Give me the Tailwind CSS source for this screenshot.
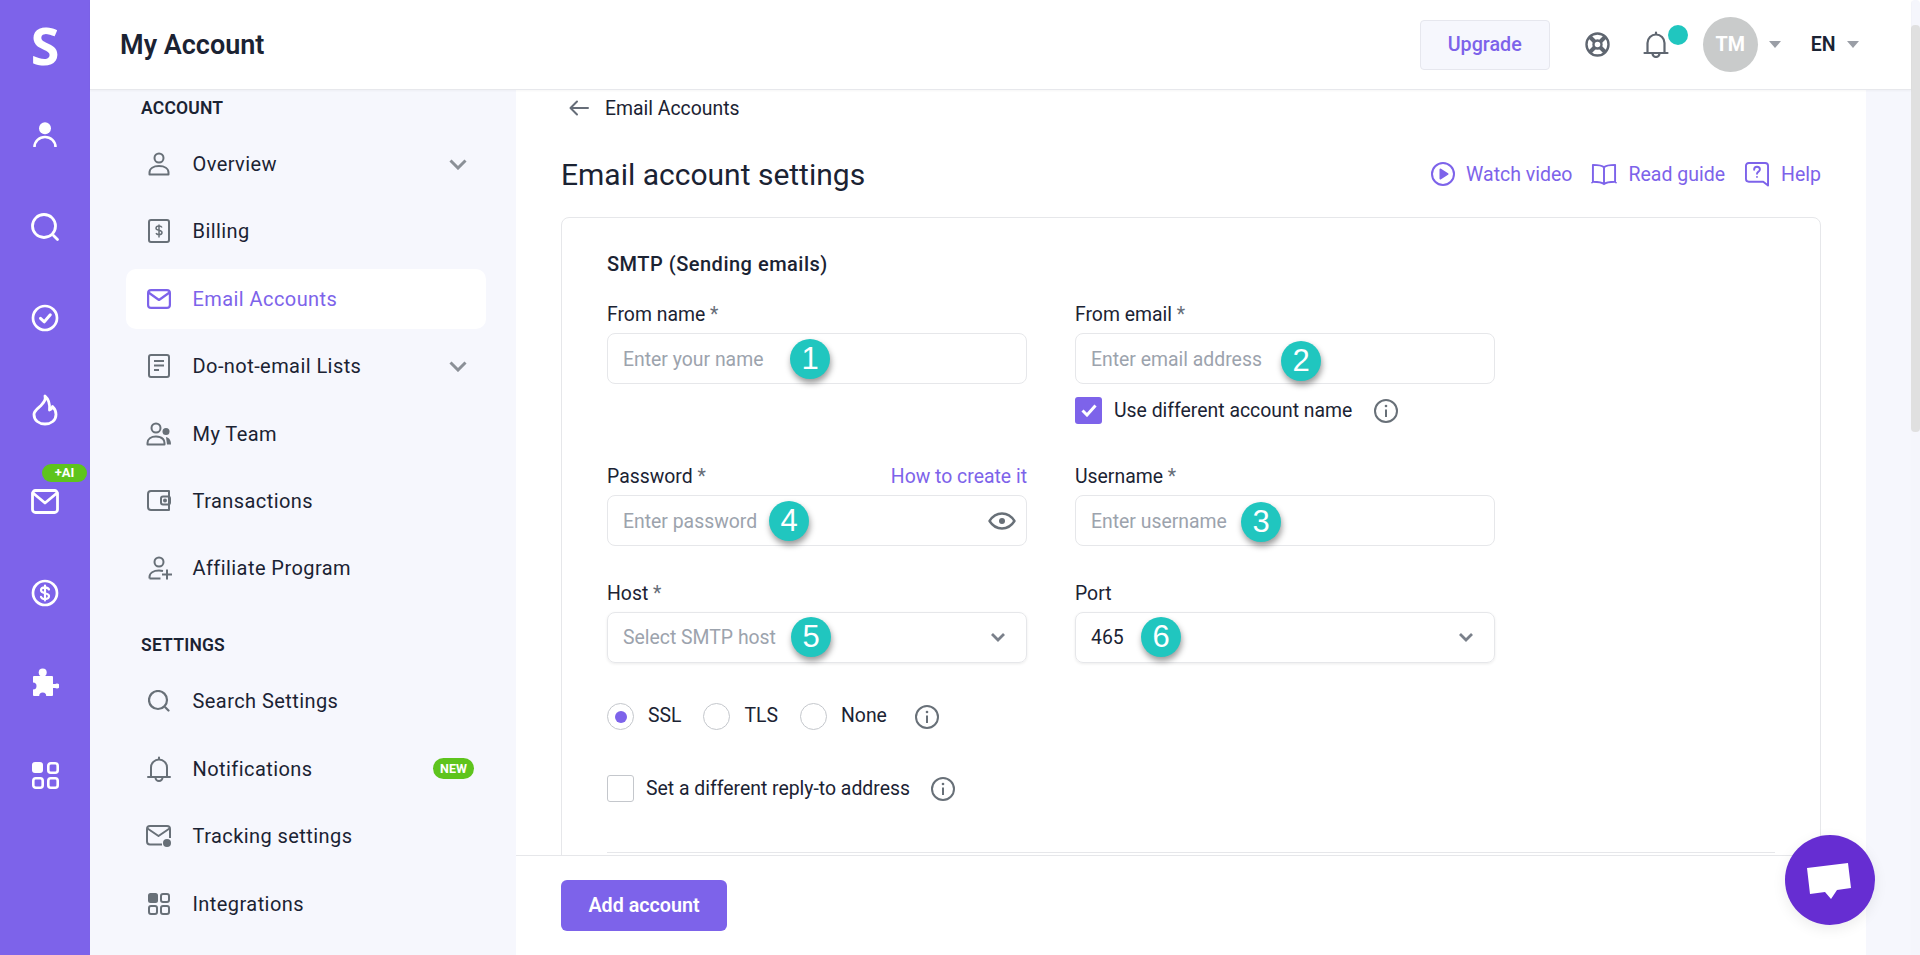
<!DOCTYPE html>
<html lang="en">
<head>
  <meta charset="UTF-8">
  <title>My Account</title>
  <script src="https://cdn.jsdelivr.net/npm/@tailwindcss/browser@4"></script>
</head>
<body class="bg-white font-[family-name:Roboto] text-[#1b2333] overflow-hidden">
<div class="relative flex w-[1920px] h-[955px] overflow-hidden">

  <!-- icon rail -->
  <nav class="w-[90px] shrink-0 h-full bg-[#7d63ea] flex flex-col items-center text-white">
    <div class="h-[90px] flex items-center justify-center font-[family-name:'Open_Sans'] font-bold text-[52px] leading-none">S</div>
    <div class="h-[91.5px] flex items-center justify-center">
      <svg class="mb-[2px] w-[28px] h-[28px]" viewBox="0 0 28 28" fill="none" stroke="white" stroke-width="2.6"><circle cx="14" cy="7.300" r="6" fill="white" stroke="none"/><path d="M3.500 26a10.500 10 0 0 1 21 0"/></svg>
    </div>
    <div class="h-[91.5px] flex items-center justify-center">
      <svg class="w-[30px] h-[30px]" viewBox="0 0 30 30" fill="none" stroke="white" stroke-width="2.8" stroke-linecap="round"><circle cx="14" cy="14" r="11.500"/><path d="M23.500 23.500l4 4"/></svg>
    </div>
    <div class="h-[91.5px] flex items-center justify-center">
      <svg class="mb-[2px] w-[28px] h-[28px]" viewBox="0 0 28 28" fill="none" stroke="white" stroke-width="2.700" stroke-linecap="round" stroke-linejoin="round"><circle cx="14" cy="14" r="12"/><path d="M9.500 14.300l3.800 3.500 6-7" stroke-width="3"/></svg>
    </div>
    <div class="h-[91.5px] flex items-center justify-center">
      <svg class="w-[26px] h-[32px]" viewBox="0 0 26 32" fill="none" stroke="white" stroke-width="2.800" stroke-linecap="round" stroke-linejoin="round"><path d="M13 2c1 4-1 6-4 9.500C6.500 14 2 16.500 2 20.500 2 26.500 7 30 13 30s11-3.500 11-9.500c0-3.500-1.500-6-3.500-8-.5 2-1.500 3-3 3.500C18 10.500 16.500 5 13 2z"/></svg>
    </div>
    <div class="h-[91.5px] flex items-center justify-center">
      <svg class="w-[28px] h-[25px]" viewBox="0 0 28 25" fill="none" stroke="white" stroke-width="2.800" stroke-linecap="round" stroke-linejoin="round"><rect x="1.500" y="1.500" width="25" height="22" rx="3"/><path d="M2 4l12 10L26 4"/></svg>
    </div>
    <div class="h-[91.5px] flex items-center justify-center">
      <svg class="w-[28px] h-[28px]" viewBox="0 0 28 28" fill="none" stroke="white" stroke-width="2.700" stroke-linecap="round"><circle cx="14" cy="14" r="12"/><path d="M18 10.500c-.7-1.500-2.200-2.200-4-2.200-2.300 0-4 1.200-4 3 0 4 8 2 8 5.800 0 1.800-1.700 3-4 3-1.900 0-3.400-.8-4-2.300M14 6.500v15" stroke-width="2.200"/></svg>
    </div>
    <div class="h-[91.5px] flex items-center justify-center">
      <svg class="mb-[5px] w-[28px] h-[28px]" viewBox="0 0 28 28" fill="white"><rect x="2" y="8" width="20" height="20" rx="1"/><rect x="9.700" y="4" width="4" height="6"/><circle cx="11.700" cy="4.500" r="4"/><rect x="20" y="16" width="5" height="4"/><circle cx="26" cy="18" r="2.500"/><circle cx="2" cy="18" r="3.500" fill="#7d63ea"/><circle cx="11.700" cy="28" r="3.500" fill="#7d63ea"/></svg>
    </div>
    <div class="h-[91.5px] flex items-center justify-center">
      <svg class="mb-[3px] w-[28px] h-[28px]" viewBox="0 0 28 28" fill="none" stroke="white" stroke-width="2.600"><rect x="1" y="1" width="11" height="11" rx="3" fill="white" stroke="none"/><rect x="17.300" y="2.300" width="9.400" height="9.400" rx="2.500"/><rect x="2.300" y="17.300" width="9.400" height="9.400" rx="2.500"/><rect x="17.300" y="17.300" width="9.400" height="9.400" rx="2.500"/></svg>
    </div>
  </nav>
  <span class="absolute left-[42px] top-[464px] w-[45px] h-[18px] rounded-full bg-[#5ec41d] text-white text-[13px] font-bold leading-[18px] text-center">+AI</span>

  <div class="flex-1 min-w-0 flex flex-col h-full">
    <!-- top bar -->
    <header class="h-[90px] shrink-0 bg-white border-b border-[#e7e8ec] shadow-[0_1px_2px_rgba(0,0,0,0.04)] flex items-center relative z-10">
      <h1 class="ml-[30px] pt-[2px] text-[27px] font-semibold text-[#1b2333]">My Account</h1>
      <div class="ml-auto flex items-center">
        <button class="w-[130px] h-[50px] rounded-[4px] border border-[#e6e7ee] bg-[#f6f7fd] text-[#7d63ea] text-[19.700px] font-medium">Upgrade</button>
        <svg class="ml-[35.500px] w-[25px] h-[25px]" viewBox="0 0 25 25" fill="none" stroke="#5f6670" stroke-width="2.400"><circle cx="12.500" cy="12.500" r="11"/><circle cx="12.500" cy="12.500" r="4"/><path d="M5 5l4.500 4.500M20 5l-4.500 4.500M5 20l4.500-4.500M20 20l-4.500-4.500" stroke-width="4"/></svg>
        <div class="relative ml-[32.500px] w-[26px] h-[27px]">
          <svg class="w-[26px] h-[27px]" viewBox="0 0 26 27" fill="none" stroke="#5f6670" stroke-width="2.200" stroke-linecap="round" stroke-linejoin="round"><path d="M1.500 22h23M4.500 22v-10a8.500 8.500 0 0 1 17 0v10M13 1.500v2M9.500 22.500a3.500 3.500 0 0 0 7 0"/></svg>
          <span class="absolute left-[25px] top-[-6px] w-[20px] h-[20px] rounded-full bg-[#20c6bf]"></span>
        </div>
        <div class="ml-[34px] w-[55px] h-[55px] rounded-full bg-[#c9cbcb] text-white text-[19.700px] font-bold flex items-center justify-center">TM</div>
        <span class="ml-[11px] w-0 h-0 border-x-[6px] border-x-transparent border-t-[7px] border-t-[#9a9ea6]"></span>
        <span class="ml-[30px] pt-[1px] text-[19.500px] font-semibold text-[#1b2333]">EN</span>
        <span class="ml-[11.500px] mr-[52px] w-0 h-0 border-x-[6px] border-x-transparent border-t-[7px] border-t-[#9a9ea6]"></span>
      </div>
    </header>

    <div class="flex-1 min-h-0 flex">
      <!-- sidebar -->
      <aside class="w-[426px] shrink-0 bg-[#f6f7fd] pl-[36px] overflow-hidden text-[20px] tracking-[0.43px]">
        <div class="h-[24px] mt-[6px] mb-[14px] pl-[15px] text-[17.500px] font-semibold leading-[24px] tracking-[0.2px]">ACCOUNT</div>
        <ul class="w-[360px] flex flex-col gap-[7.400px]">
          <li class="h-[60px] flex items-center pl-[22px] pr-[19.500px] rounded-[10px]">
            <svg class="w-[22px] h-[24px] mr-[22.500px]" viewBox="0 0 22 24" fill="none" stroke="#687078" stroke-width="2"><circle cx="11" cy="6" r="4.500"/><path d="M1.500 22.500v-2c0-4 4-6.500 9.500-6.500s9.500 2.500 9.500 6.500v2z" stroke-linejoin="round"/></svg>
            <span>Overview</span>
            <svg class="ml-auto w-[18px] h-[11px]" viewBox="0 0 18 11" fill="none" stroke="#8b9097" stroke-width="3"><path d="M1.500 1.500L9 9l7.500-7.500"/></svg>
          </li>
          <li class="h-[60px] flex items-center pl-[22px] pr-[19.500px] rounded-[10px]">
            <svg class="w-[22px] h-[24px] mr-[22.500px]" viewBox="0 0 22 24" fill="none" stroke="#687078" stroke-width="2"><rect x="1" y="1" width="20" height="22" rx="2"/><path d="M14 8.500c-.5-1-1.500-1.500-3-1.500-1.700 0-3 .8-3 2.200 0 2.800 6 1.500 6 4.300 0 1.300-1.300 2.200-3 2.200-1.500 0-2.500-.5-3-1.500M11 5.500v13" stroke-width="1.500"/></svg>
            <span>Billing</span>
          </li>
          <li class="h-[60px] flex items-center pl-[21px] pr-[19.500px] rounded-[10px] bg-white text-[#7d63ea]">
            <svg class="w-[24px] h-[20px] mr-[21.500px]" viewBox="0 0 24 20" fill="none" stroke="#7d63ea" stroke-width="2.200" stroke-linejoin="round"><rect x="1.100" y="1.100" width="21.800" height="17.800" rx="3"/><path d="M1.500 3.500L12 11l10.500-7.500"/></svg>
            <span>Email Accounts</span>
          </li>
          <li class="h-[60px] flex items-center pl-[22px] pr-[19.500px] rounded-[10px]">
            <svg class="w-[22px] h-[24px] mr-[22.500px]" viewBox="0 0 22 24" fill="none" stroke="#687078" stroke-width="2"><rect x="1" y="1" width="20" height="22" rx="2"/><path d="M6 7h10M6 11.500h10M6 16h5"/></svg>
            <span>Do-not-email Lists</span>
            <svg class="ml-auto w-[18px] h-[11px]" viewBox="0 0 18 11" fill="none" stroke="#8b9097" stroke-width="3"><path d="M1.500 1.500L9 9l7.500-7.500"/></svg>
          </li>
          <li class="h-[60px] flex items-center pl-[20px] pr-[19.500px] rounded-[10px]">
            <svg class="w-[26px] h-[24px] mr-[20.500px]" viewBox="0 0 26 24" fill="none" stroke="#687078" stroke-width="2"><circle cx="10" cy="6" r="4.500"/><path d="M1.500 22.500v-1.500c0-4 3.500-6.500 8.500-6.500 3 0 5.500 1 7 2.500 1 1 1.500 2.500 1.500 4v1.500z" stroke-linejoin="round"/><circle cx="20" cy="9.500" r="3.500" fill="#687078" stroke="none"/><path d="M20 15c2.500.5 5 2.500 5 7.500h-4z" fill="#687078" stroke="none"/></svg>
            <span>My Team</span>
          </li>
          <li class="h-[60px] flex items-center pl-[21px] pr-[19.500px] rounded-[10px]">
            <svg class="w-[24px] h-[21px] mr-[21.500px]" viewBox="0 0 24 21" fill="none" stroke="#687078" stroke-width="2"><path d="M22 1H4a3 3 0 0 0-3 3v13a3 3 0 0 0 3 3h18v-19z" stroke-linejoin="round"/><rect x="14" y="6.500" width="9" height="8" rx="2"/><circle cx="18" cy="10.500" r="1" fill="#687078"/></svg>
            <span>Transactions</span>
          </li>
          <li class="h-[60px] flex items-center pl-[22px] pr-[19.500px] rounded-[10px]">
            <svg class="w-[25px] h-[24px] mr-[19.500px]" viewBox="0 0 25 24" fill="none" stroke="#687078" stroke-width="2"><circle cx="11" cy="6" r="4.500"/><path d="M1.500 22.500v-1.500c0-4 4-6.500 9.500-6.500 1.500 0 2.800.2 4 .5M1.500 22.500h11M19 13.500v10M14 18.500h10" stroke-linejoin="round"/></svg>
            <span>Affiliate Program</span>
          </li>
        </ul>
        <div class="h-[24px] mt-[35px] mb-[14px] pl-[15px] text-[17.500px] font-semibold leading-[24px] tracking-[0.2px]">SETTINGS</div>
        <ul class="w-[360px] flex flex-col gap-[7.400px]">
          <li class="h-[60px] flex items-center pl-[22px] pr-[19.500px] rounded-[10px]">
            <svg class="w-[22px] h-[22px] mr-[22.500px]" viewBox="0 0 22 22" fill="none" stroke="#687078" stroke-width="2.200" stroke-linecap="round"><circle cx="10" cy="10" r="9"/><path d="M17.500 17.500L20.500 20.500"/></svg>
            <span>Search Settings</span>
          </li>
          <li class="h-[60px] flex items-center pl-[21px] pr-[12px] rounded-[10px]">
            <svg class="w-[24px] h-[26px] mr-[21.500px]" viewBox="0 0 24 26" fill="none" stroke="#687078" stroke-width="2" stroke-linecap="round" stroke-linejoin="round"><path d="M1 21h22M4 21v-9.500a8 8 0 0 1 16 0V21M12 1.500v2M8.500 21.500a3.500 3.500 0 0 0 7 0"/></svg>
            <span>Notifications</span>
            <span class="ml-auto w-[41px] h-[21px] rounded-full bg-[#5ec41d] text-white text-[12.500px] font-bold leading-[21px] tracking-normal text-center">NEW</span>
          </li>
          <li class="h-[60px] flex items-center pl-[20px] pr-[19.500px] rounded-[10px]">
            <svg class="w-[26px] h-[23px] mr-[20.500px]" viewBox="0 0 26 23" fill="none" stroke="#687078" stroke-width="2" stroke-linejoin="round"><path d="M16 19.500H4a3 3 0 0 1-3-3V4a3 3 0 0 1 3-3h17a3 3 0 0 1 3 3v9"/><path d="M1.500 3.500L12.500 11l11-7.500"/><circle cx="21" cy="18" r="4" fill="#687078" stroke="none"/></svg>
            <span>Tracking settings</span>
          </li>
          <li class="h-[60px] flex items-center pl-[22px] pr-[19.500px] rounded-[10px]">
            <svg class="w-[22px] h-[22px] mr-[22.500px]" viewBox="0 0 22 22" fill="none" stroke="#687078" stroke-width="2"><rect x="0" y="0" width="10" height="10" rx="2.500" fill="#687078" stroke="none"/><rect x="13" y="1" width="8" height="8" rx="2"/><rect x="1" y="13" width="8" height="8" rx="2"/><rect x="13" y="13" width="8" height="8" rx="2"/></svg>
            <span>Integrations</span>
          </li>
        </ul>
      </aside>

      <!-- main -->
      <main class="w-[1350px] shrink-0 bg-white flex flex-col min-h-0">
        <div class="flex-1 min-h-0 overflow-hidden px-[45px]">
          <div class="flex items-center h-[36px] text-[19.400px]">
            <svg class="ml-[8px] w-[20px] h-[16px] mr-[16px]" viewBox="0 0 20 16" fill="none" stroke="#666d78" stroke-width="2" stroke-linecap="round" stroke-linejoin="round"><path d="M19 8H2M8 1.500L1.500 8 8 14.500"/></svg>
            <span class="pt-[2px]">Email Accounts</span>
          </div>
          <div class="flex items-center h-[40px] mt-[28px]">
            <h2 class="pt-[2px] text-[30px] leading-[40px]">Email account settings</h2>
            <div class="ml-auto flex items-center text-[19.500px] text-[#7d63ea]">
              <svg class="w-[24px] h-[24px] mr-[11px]" viewBox="0 0 24 24" fill="none" stroke="#7d63ea" stroke-width="2"><circle cx="12" cy="12" r="11"/><path d="M9.500 7.500l7 4.500-7 4.500z" fill="#7d63ea" stroke-linejoin="round"/></svg>
              <span class="pt-[2px]">Watch video</span>
              <svg class="ml-[19px] w-[26px] h-[23px] mr-[11px]" viewBox="0 0 27 23" fill="none" stroke="#7d63ea" stroke-width="2" stroke-linejoin="round"><path d="M13.500 4C11.500 2 8 1.500 2 1.500V19c6 0 9.500.5 11.500 2.500C15.500 19.500 19 19 25 19V1.500C19 1.500 15.500 2 13.500 4zM13.500 4v17.500M1 20.500v-1M26 20.500v-1"/></svg>
              <span class="pt-[2px]">Read guide</span>
              <svg class="ml-[20px] w-[24px] h-[26px] mr-[12px]" viewBox="0 0 25 26" fill="none" stroke="#7d63ea" stroke-width="2" stroke-linejoin="round"><path d="M4 1.500h17a3 3 0 0 1 3 3V25l-5-4H4a3 3 0 0 1-3-3V4.500a3 3 0 0 1 3-3z"/><path d="M9.500 8.500c0-1.800 1.300-3 3-3s3 1.200 3 2.800c0 2.300-3 2.200-3 4.500" stroke-linecap="round"/><circle cx="12.500" cy="16" r="1" fill="#7d63ea" stroke="none"/></svg>
              <span class="pt-[2px]">Help</span>
            </div>
          </div>

          <section class="mt-[23px] w-[1260px] h-[700px] rounded-[8px] border border-[#e6e7ea] pl-[45px] pr-[45px] pt-[34px] text-[19.400px]">
            <h3 class="h-[24px] leading-[24px] text-[20px] tracking-[0.5px] font-medium">SMTP (Sending emails)</h3>

            <div class="mt-[27px] grid grid-cols-[420px_420px] gap-x-[48px] items-start">
              <!-- row 1 -->
              <div>
                <label class="block h-[22px] leading-[24px]">From name <span class="text-[#666d78]">*</span></label>
                <div class="relative mt-[8px]">
                  <input class="w-full h-[51px] rounded-[8px] border border-[#e6e7ea] px-[15px] pt-[2px] text-[19.400px] placeholder:text-[#9ca3ad] outline-none" placeholder="Enter your name">
                  <span class="absolute left-[183px] top-[6px] w-[40px] h-[40px] rounded-full bg-[#20c6bf] text-white font-[family-name:'Liberation_Sans'] text-[31px] leading-[40px] text-center shadow-[1px_4px_6px_rgba(0,0,0,0.4)]">1</span>
                </div>
              </div>
              <div>
                <label class="block h-[22px] leading-[24px]">From email <span class="text-[#666d78]">*</span></label>
                <div class="relative mt-[8px]">
                  <input class="w-full h-[51px] rounded-[8px] border border-[#e6e7ea] px-[15px] pt-[2px] text-[19.400px] placeholder:text-[#9ca3ad] outline-none" placeholder="Enter email address">
                  <span class="absolute left-[206px] top-[8px] w-[40px] h-[40px] rounded-full bg-[#20c6bf] text-white font-[family-name:'Liberation_Sans'] text-[31px] leading-[40px] text-center shadow-[1px_4px_6px_rgba(0,0,0,0.4)]">2</span>
                </div>
                <div class="mt-[13px] flex items-center h-[27px]">
                  <span class="w-[27px] h-[27px] rounded-[3px] bg-[#7d63ea] flex items-center justify-center">
                    <svg class="w-[16px] h-[13px]" viewBox="0 0 16 13" fill="none" stroke="white" stroke-width="3"><path d="M1.500 6.500L6 11l8.500-9.500"/></svg>
                  </span>
                  <span class="ml-[12px]">Use different account name</span>
                  <svg class="ml-[22px] w-[24px] h-[24px]" viewBox="0 0 24 24" fill="none" stroke="#687078" stroke-width="2"><circle cx="12" cy="12" r="11"/><path d="M12 10.500v7.500"/><circle cx="12" cy="7" r="1.300" fill="#687078" stroke="none"/></svg>
                </div>
              </div>

              <!-- row 2 -->
              <div class="mt-[41px]">
                <div class="flex justify-between h-[22px] leading-[24px]">
                  <label>Password <span class="text-[#666d78]">*</span></label>
                  <a class="text-[#7d63ea]">How to create it</a>
                </div>
                <div class="relative mt-[8px]">
                  <input class="w-full h-[51px] rounded-[8px] border border-[#e6e7ea] px-[15px] pt-[2px] text-[19.400px] placeholder:text-[#9ca3ad] outline-none" placeholder="Enter password">
                  <span class="absolute left-[162px] top-[6px] w-[40px] h-[40px] rounded-full bg-[#20c6bf] text-white font-[family-name:'Liberation_Sans'] text-[31px] leading-[40px] text-center shadow-[1px_4px_6px_rgba(0,0,0,0.4)]">4</span>
                  <svg class="absolute right-[11px] top-[17px] w-[28px] h-[18px]" viewBox="0 0 28 18" fill="none" stroke="#687078" stroke-width="2.400"><path d="M1.500 9C5 3.500 9 1.500 14 1.500S23 3.500 26.500 9C23 14.500 19 16.500 14 16.500S5 14.500 1.500 9z" stroke-linejoin="round"/><circle cx="14" cy="9" r="3" fill="#687078" stroke="none"/></svg>
                </div>
              </div>
              <div class="mt-[41px]">
                <label class="block h-[22px] leading-[24px]">Username <span class="text-[#666d78]">*</span></label>
                <div class="relative mt-[8px]">
                  <input class="w-full h-[51px] rounded-[8px] border border-[#e6e7ea] px-[15px] pt-[2px] text-[19.400px] placeholder:text-[#9ca3ad] outline-none" placeholder="Enter username">
                  <span class="absolute left-[166px] top-[7px] w-[40px] h-[40px] rounded-full bg-[#20c6bf] text-white font-[family-name:'Liberation_Sans'] text-[31px] leading-[40px] text-center shadow-[1px_4px_6px_rgba(0,0,0,0.4)]">3</span>
                </div>
              </div>

              <!-- row 3 -->
              <div class="mt-[36px]">
                <label class="block h-[22px] leading-[24px]">Host <span class="text-[#666d78]">*</span></label>
                <div class="relative mt-[8px] h-[51px] rounded-[8px] border border-[#e6e7ea] shadow-[0_1px_3px_rgba(0,0,0,0.08)] px-[15px] flex items-center">
                  <span class="text-[#9ca3ad]">Select SMTP host</span>
                  <span class="absolute left-[183px] top-[4px] w-[40px] h-[40px] rounded-full bg-[#20c6bf] text-white font-[family-name:'Liberation_Sans'] text-[31px] leading-[40px] text-center shadow-[1px_4px_6px_rgba(0,0,0,0.4)]">5</span>
                  <svg class="ml-auto mr-[6px] w-[14px] h-[9px]" viewBox="0 0 14 9" fill="none" stroke="#7a808a" stroke-width="2.800"><path d="M1 1l6 6 6-6"/></svg>
                </div>
              </div>
              <div class="mt-[36px]">
                <label class="block h-[22px] leading-[24px]">Port</label>
                <div class="relative mt-[8px] h-[51px] rounded-[8px] border border-[#e6e7ea] shadow-[0_1px_3px_rgba(0,0,0,0.08)] px-[15px] flex items-center">
                  <span>465</span>
                  <span class="absolute left-[65px] top-[4px] w-[40px] h-[40px] rounded-full bg-[#20c6bf] text-white font-[family-name:'Liberation_Sans'] text-[31px] leading-[40px] text-center shadow-[1px_4px_6px_rgba(0,0,0,0.4)]">6</span>
                  <svg class="ml-auto mr-[6px] w-[14px] h-[9px]" viewBox="0 0 14 9" fill="none" stroke="#7a808a" stroke-width="2.800"><path d="M1 1l6 6 6-6"/></svg>
                </div>
              </div>
            </div>

            <div class="mt-[40px] flex items-center h-[27px]">
              <span class="w-[27px] h-[27px] rounded-full border border-[#c4c7cc] flex items-center justify-center"><span class="w-[12px] h-[12px] rounded-full bg-[#7d63ea]"></span></span>
              <span class="ml-[14px] mb-[2px]">SSL</span>
              <span class="ml-[22px] w-[27px] h-[27px] rounded-full border border-[#c4c7cc]"></span>
              <span class="ml-[14px] mb-[2px]">TLS</span>
              <span class="ml-[22px] w-[27px] h-[27px] rounded-full border border-[#c4c7cc]"></span>
              <span class="ml-[14px] mb-[2px]">None</span>
              <svg class="ml-[28px] w-[24px] h-[24px]" viewBox="0 0 24 24" fill="none" stroke="#687078" stroke-width="2"><circle cx="12" cy="12" r="11"/><path d="M12 10.500v7.500"/><circle cx="12" cy="7" r="1.300" fill="#687078" stroke="none"/></svg>
            </div>

            <div class="mt-[45px] flex items-center h-[27px]">
              <span class="w-[27px] h-[27px] rounded-[3px] border border-[#c4c7cc]"></span>
              <span class="ml-[12px]">Set a different reply-to address</span>
              <svg class="ml-[21px] w-[24px] h-[24px]" viewBox="0 0 24 24" fill="none" stroke="#687078" stroke-width="2"><circle cx="12" cy="12" r="11"/><path d="M12 10.500v7.500"/><circle cx="12" cy="7" r="1.300" fill="#687078" stroke="none"/></svg>
            </div>

            <hr class="mt-[50px] border-t border-[#e6e7ea]">
          </section>
        </div>
        <footer class="h-[100px] shrink-0 border-t border-[#e6e7ea] bg-white px-[45px] flex items-center">
          <button class="w-[166px] h-[51px] rounded-[6px] bg-[#7d63ea] text-white text-[19.700px] font-semibold">Add account</button>
        </footer>
      </main>

      <div class="flex-1 bg-[#f6f7fd]"></div>
    </div>
  </div>

  <!-- scrollbar -->
  <div class="w-[9px] shrink-0 h-full bg-[#f5f6fc] rounded-t-[4px] pt-[25px]">
    <div class="h-[407px] bg-[#e0e0e0] rounded-[4px]"></div>
  </div>

  <!-- chat launcher -->
  <button class="absolute left-[1785px] top-[835px] w-[90px] h-[90px] rounded-full bg-[#662dd2] shadow-[0_4px_14px_rgba(0,0,0,0.08)]">
    <svg class="w-[90px] h-[90px]" viewBox="0 0 90 90" fill="white"><path d="M22 33l41-5 3 25-14 2-6 9-6-7-15 2z"/></svg>
  </button>
</div>
</body>
</html>
